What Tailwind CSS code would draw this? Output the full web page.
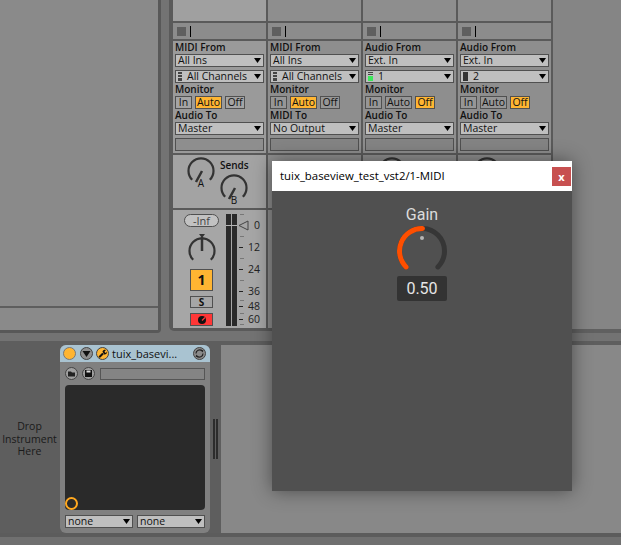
<!DOCTYPE html>
<html lang="en">
<head>
    <meta charset="UTF-8">
    <meta name="viewport" content="width=device-width, initial-scale=1.0">
    <title>tuix_baseview_test_vst2</title>
    <script src="https://cdn.jsdelivr.net/npm/@tailwindcss/browser@4"></script>
</head>
<body class="bg-[#5c5c5c]">
<div class="relative w-[621px] h-[545px] overflow-hidden flex flex-col bg-[#5c5c5c] font-['Open_Sans',sans-serif] text-[10.5px] leading-none text-[#111]">

    <!-- session view -->
    <div class="flex h-[333px] bg-[#737373]">
        <div class="w-[161px] h-[333px] flex flex-col border-r-[3px] border-b-[3px] border-[#585858] rounded-br-[4px] bg-[#8a8a8a]">
            <div class="h-[306px]"></div>
            <div class="h-[2px] bg-[#5e5e5e]"></div>
        </div>

        <div class="ml-[8px] h-[331px] flex gap-[2px] bg-[#5a5a5a] border-l-[4px] border-r-[2px] border-b-[3px] border-[#5a5a5a] rounded-bl-[5px]">

            <!-- track 1 -->
            <div class="w-[93px] flex flex-col gap-[2px]">
                <div class="h-[21px] bg-[#a0a0a0]"></div>
                <div class="h-[16px] bg-[#8c8c8c] flex items-center pl-[4px] gap-[4px]">
                    <div class="w-[9px] h-[9px] bg-[#5f5f5f]"></div>
                    <div class="w-[1px] h-[11px] bg-black"></div>
                </div>
                <div class="h-[112px] bg-[#9a9a9a] flex flex-col px-[2px] pt-[1px]">
                    <div class="h-[12px] pb-[2px] flex items-center text-[10px] font-semibold">MIDI From</div>
                    <div class="h-[13px] border border-[#505050] bg-[#bfbfbf] flex items-center justify-between px-[2px]">
                        <span>All Ins</span>
                        <svg class="w-[7px] h-[5px]" viewBox="0 0 7 5"><path d="M0 0h7L3.5 5z"/></svg>
                    </div>
                    <div class="mt-[3px] h-[13px] border border-[#505050] bg-[#bfbfbf] flex items-center px-[2px]">
                        <svg class="w-[4px] h-[9px] mr-[5px]" viewBox="0 0 4 9"><path fill="#444" d="M0 0h4v2H0zM0 3h4v2H0zM0 6h4v3H0z"/></svg>
                        <span class="flex-1">All Channels</span>
                        <svg class="w-[7px] h-[5px]" viewBox="0 0 7 5"><path d="M0 0h7L3.5 5z"/></svg>
                    </div>
                    <div class="h-[13px] pb-[1px] flex items-center text-[10px] font-semibold">Monitor</div>
                    <div class="h-[13px] flex gap-[3px]">
                        <div class="w-[17px] border border-[#505050] bg-[#a4a4a4] flex items-center justify-center">In</div>
                        <div class="w-[27px] border border-[#505050] bg-[#ffb532] flex items-center justify-center">Auto</div>
                        <div class="w-[20px] border border-[#505050] bg-[#a4a4a4] flex items-center justify-center">Off</div>
                    </div>
                    <div class="h-[13px] pb-[1px] flex items-center text-[10px] font-semibold">Audio To</div>
                    <div class="h-[13px] border border-[#505050] bg-[#bfbfbf] flex items-center justify-between px-[2px]">
                        <span>Master</span>
                        <svg class="w-[7px] h-[5px]" viewBox="0 0 7 5"><path d="M0 0h7L3.5 5z"/></svg>
                    </div>
                    <div class="mt-[3px] h-[13px] border border-[#505050] bg-[#8e8e8e]"></div>
                </div>
                <div class="h-[53px] bg-[#a3a3a3]">
                    <svg class="w-[93px] h-[53px]" viewBox="0 0 93 53">
                        <g fill="none" stroke="#333" stroke-width="2.200">
                            <path d="M19.200 24.800A12.500 12.500 0 1 1 36.800 24.800"/>
                            <path d="M52.200 41.800A12.500 12.500 0 1 1 69.800 41.800"/>
                            <path stroke-width="2.500" d="M29 16L23 27M62 33L56 44"/>
                        </g>
                        <g fill="#111" font-size="10">
                            <text x="47" y="14" font-weight="600">Sends</text>
                            <text x="28" y="32" text-anchor="middle">A</text>
                            <text x="61" y="49" text-anchor="middle">B</text>
                        </g>
                    </svg>
                </div>
                <div class="h-[118px] bg-[#a6a6a6] flex pt-[4px]">
                    <div class="ml-[11px] w-[35px] flex flex-col items-center">
                        <div class="w-[35px] h-[13px] rounded-full border border-[#505050] bg-[#c2c2c2] flex items-center justify-center text-[11px] text-[#444]">-Inf</div>
                        <svg class="mt-[7px] w-[28px] h-[30px]" viewBox="0 0 28 30">
                            <path d="M11 0h6l-3 4z" fill="#333"/>
                            <path d="M5.200 25.800A12.500 12.500 0 1 1 22.800 25.800" fill="none" stroke="#333" stroke-width="2.200"/>
                            <path d="M14 3V17" stroke="#333" stroke-width="2.500"/>
                        </svg>
                        <div class="mt-[5px] w-[23px] h-[22px] border border-[#505050] bg-[#ffb532] flex items-center justify-center text-[14px] font-bold">1</div>
                        <div class="mt-[5px] w-[23px] h-[12px] border border-[#505050] bg-[#a6a6a6] flex items-center justify-center text-[10px] font-bold">S</div>
                        <div class="mt-[5px] w-[23px] h-[13px] border border-[#505050] bg-[#ff3636] flex items-center justify-center">
                            <svg class="w-[8px] h-[8px]" viewBox="0 0 8 8"><circle cx="4" cy="4" r="4" fill="#111"/><path d="M4 4.500L7 1.500" stroke="#ff3636" stroke-width="1.200"/></svg>
                        </div>
                    </div>
                    <div class="relative ml-[7px] w-[11px] h-[112px] flex gap-[1px]">
                        <div class="flex-1 bg-[#2a2a2a]"></div>
                        <div class="flex-1 bg-[#2a2a2a]"></div>
                        <div class="absolute left-0 right-0 top-[11px] h-[1px] bg-[#b5b5b5]"></div>
                    </div>
                    <svg class="w-[29px] h-[118px] -mt-[4px]" viewBox="0 0 29 118">
                        <g stroke="#777" stroke-width="1">
                            <path d="M3 4.500h4M3 26.500h4M3 48.500h4M3 70.500h4M3 90.500h4M3 103.500h4M3 114.500h4"/>
                        </g>
                        <g stroke="#222" stroke-width="1.200">
                            <path d="M2 37.500h4M2 59.500h4M2 81.500h4M2 96.500h4M2 109.500h4"/>
                        </g>
                        <path d="M2 15.500L11 11v9z" fill="none" stroke="#444"/>
                        <g fill="#222" font-size="10.500" text-anchor="end">
                            <text x="23" y="19">0</text>
                            <text x="23" y="41">12</text>
                            <text x="23" y="63">24</text>
                            <text x="23" y="85">36</text>
                            <text x="23" y="100">48</text>
                            <text x="23" y="113">60</text>
                        </g>
                    </svg>
                </div>
            </div>

            <!-- track 2 -->
            <div class="w-[93px] flex flex-col gap-[2px]">
                <div class="h-[21px] bg-[#8e8e8e]"></div>
                <div class="h-[16px] bg-[#8c8c8c] flex items-center pl-[4px] gap-[4px]">
                    <div class="w-[9px] h-[9px] bg-[#5f5f5f]"></div>
                    <div class="w-[1px] h-[11px] bg-black"></div>
                </div>
                <div class="h-[112px] bg-[#8e8e8e] flex flex-col px-[2px] pt-[1px]">
                    <div class="h-[12px] pb-[2px] flex items-center text-[10px] font-semibold">MIDI From</div>
                    <div class="h-[13px] border border-[#505050] bg-[#bfbfbf] flex items-center justify-between px-[2px]">
                        <span>All Ins</span>
                        <svg class="w-[7px] h-[5px]" viewBox="0 0 7 5"><path d="M0 0h7L3.5 5z"/></svg>
                    </div>
                    <div class="mt-[3px] h-[13px] border border-[#505050] bg-[#bfbfbf] flex items-center px-[2px]">
                        <svg class="w-[4px] h-[9px] mr-[5px]" viewBox="0 0 4 9"><path fill="#444" d="M0 0h4v2H0zM0 3h4v2H0zM0 6h4v3H0z"/></svg>
                        <span class="flex-1">All Channels</span>
                        <svg class="w-[7px] h-[5px]" viewBox="0 0 7 5"><path d="M0 0h7L3.5 5z"/></svg>
                    </div>
                    <div class="h-[13px] pb-[1px] flex items-center text-[10px] font-semibold">Monitor</div>
                    <div class="h-[13px] flex gap-[3px]">
                        <div class="w-[17px] border border-[#505050] bg-[#969696] flex items-center justify-center">In</div>
                        <div class="w-[27px] border border-[#505050] bg-[#ffb532] flex items-center justify-center">Auto</div>
                        <div class="w-[20px] border border-[#505050] bg-[#969696] flex items-center justify-center">Off</div>
                    </div>
                    <div class="h-[13px] pb-[1px] flex items-center text-[10px] font-semibold">MIDI To</div>
                    <div class="h-[13px] border border-[#505050] bg-[#bfbfbf] flex items-center justify-between px-[2px]">
                        <span>No Output</span>
                        <svg class="w-[7px] h-[5px]" viewBox="0 0 7 5"><path d="M0 0h7L3.5 5z"/></svg>
                    </div>
                    <div class="mt-[3px] h-[13px] border border-[#505050] bg-[#848484]"></div>
                </div>
                <div class="h-[53px] bg-[#8e8e8e]"></div>
                <div class="h-[118px] bg-[#8e8e8e]"></div>
            </div>

            <!-- track 3 -->
            <div class="w-[93px] flex flex-col gap-[2px]">
                <div class="h-[21px] bg-[#8e8e8e]"></div>
                <div class="h-[16px] bg-[#8c8c8c] flex items-center pl-[4px] gap-[4px]">
                    <div class="w-[9px] h-[9px] bg-[#5f5f5f]"></div>
                    <div class="w-[1px] h-[11px] bg-black"></div>
                </div>
                <div class="h-[112px] bg-[#8e8e8e] flex flex-col px-[2px] pt-[1px]">
                    <div class="h-[12px] pb-[2px] flex items-center text-[10px] font-semibold">Audio From</div>
                    <div class="h-[13px] border border-[#505050] bg-[#bfbfbf] flex items-center justify-between px-[2px]">
                        <span>Ext. In</span>
                        <svg class="w-[7px] h-[5px]" viewBox="0 0 7 5"><path d="M0 0h7L3.5 5z"/></svg>
                    </div>
                    <div class="mt-[3px] h-[13px] border border-[#505050] bg-[#bfbfbf] flex items-center px-[2px]">
                        <svg class="w-[5px] h-[9px] mr-[5px]" viewBox="0 0 5 9"><path fill="#444" d="M0 0h5v1H0zM0 2h5v1H0z"/><path fill="#3be85a" d="M0 4h5v5H0z"/></svg>
                        <span class="flex-1">1</span>
                        <svg class="w-[7px] h-[5px]" viewBox="0 0 7 5"><path d="M0 0h7L3.5 5z"/></svg>
                    </div>
                    <div class="h-[13px] pb-[1px] flex items-center text-[10px] font-semibold">Monitor</div>
                    <div class="h-[13px] flex gap-[3px]">
                        <div class="w-[17px] border border-[#505050] bg-[#969696] flex items-center justify-center">In</div>
                        <div class="w-[27px] border border-[#505050] bg-[#969696] flex items-center justify-center">Auto</div>
                        <div class="w-[20px] border border-[#505050] bg-[#ffb532] flex items-center justify-center">Off</div>
                    </div>
                    <div class="h-[13px] pb-[1px] flex items-center text-[10px] font-semibold">Audio To</div>
                    <div class="h-[13px] border border-[#505050] bg-[#bfbfbf] flex items-center justify-between px-[2px]">
                        <span>Master</span>
                        <svg class="w-[7px] h-[5px]" viewBox="0 0 7 5"><path d="M0 0h7L3.5 5z"/></svg>
                    </div>
                    <div class="mt-[3px] h-[13px] border border-[#505050] bg-[#848484]"></div>
                </div>
                <div class="h-[53px] bg-[#8e8e8e]">
                    <svg class="w-[93px] h-[53px]" viewBox="0 0 93 53">
                        <path d="M20.200 24.800A12.500 12.500 0 1 1 37.800 24.800" fill="none" stroke="#333" stroke-width="2.200"/>
                    </svg>
                </div>
                <div class="h-[118px] bg-[#8e8e8e]"></div>
            </div>

            <!-- track 4 -->
            <div class="w-[93px] flex flex-col gap-[2px]">
                <div class="h-[21px] bg-[#8e8e8e]"></div>
                <div class="h-[16px] bg-[#8c8c8c] flex items-center pl-[4px] gap-[4px]">
                    <div class="w-[9px] h-[9px] bg-[#5f5f5f]"></div>
                    <div class="w-[1px] h-[11px] bg-black"></div>
                </div>
                <div class="h-[112px] bg-[#8e8e8e] flex flex-col px-[2px] pt-[1px]">
                    <div class="h-[12px] pb-[2px] flex items-center text-[10px] font-semibold">Audio From</div>
                    <div class="h-[13px] border border-[#505050] bg-[#bfbfbf] flex items-center justify-between px-[2px]">
                        <span>Ext. In</span>
                        <svg class="w-[7px] h-[5px]" viewBox="0 0 7 5"><path d="M0 0h7L3.5 5z"/></svg>
                    </div>
                    <div class="mt-[3px] h-[13px] border border-[#505050] bg-[#bfbfbf] flex items-center px-[2px]">
                        <svg class="w-[5px] h-[9px] mr-[5px]" viewBox="0 0 5 9"><path fill="#333" d="M0 0h5v9H0z"/></svg>
                        <span class="flex-1">2</span>
                        <svg class="w-[7px] h-[5px]" viewBox="0 0 7 5"><path d="M0 0h7L3.5 5z"/></svg>
                    </div>
                    <div class="h-[13px] pb-[1px] flex items-center text-[10px] font-semibold">Monitor</div>
                    <div class="h-[13px] flex gap-[3px]">
                        <div class="w-[17px] border border-[#505050] bg-[#969696] flex items-center justify-center">In</div>
                        <div class="w-[27px] border border-[#505050] bg-[#969696] flex items-center justify-center">Auto</div>
                        <div class="w-[20px] border border-[#505050] bg-[#ffb532] flex items-center justify-center">Off</div>
                    </div>
                    <div class="h-[13px] pb-[1px] flex items-center text-[10px] font-semibold">Audio To</div>
                    <div class="h-[13px] border border-[#505050] bg-[#bfbfbf] flex items-center justify-between px-[2px]">
                        <span>Master</span>
                        <svg class="w-[7px] h-[5px]" viewBox="0 0 7 5"><path d="M0 0h7L3.5 5z"/></svg>
                    </div>
                    <div class="mt-[3px] h-[13px] border border-[#505050] bg-[#848484]"></div>
                </div>
                <div class="h-[53px] bg-[#8e8e8e]">
                    <svg class="w-[93px] h-[53px]" viewBox="0 0 93 53">
                        <path d="M20.200 24.800A12.500 12.500 0 1 1 37.800 24.800" fill="none" stroke="#333" stroke-width="2.200"/>
                    </svg>
                </div>
                <div class="h-[118px] bg-[#8e8e8e]"></div>
            </div>
        </div>

        <div class="flex-1 h-[333px] bg-[#858585] border-b-[4px] border-[#606060]"></div>
    </div>

    <div class="h-[8px] bg-[#737373]"></div>

    <!-- device view -->
    <div class="h-[192px] flex pt-[4px] bg-[#5e5e5e]">
        <div class="w-[60px] flex flex-col items-center justify-center text-center leading-[12.500px] pr-[1px] text-[#1a1a1a]">
            <span>Drop</span>
            <span>Instrument</span>
            <span>Here</span>
        </div>

        <div class="w-[150px] h-[188px] rounded-[6px] bg-[#808080] flex flex-col overflow-hidden">
            <div class="h-[17px] bg-[#a9c3d1] flex items-center pl-[3px] pr-[4px]">
                <svg class="w-[13px] h-[13px]" viewBox="0 0 13 13"><circle cx="6.500" cy="6.500" r="6" fill="#ffb532" stroke="#777"/></svg>
                <svg class="ml-[4px] w-[13px] h-[13px]" viewBox="0 0 13 13"><circle cx="6.500" cy="6.500" r="6" fill="#8f8f8f" stroke="#444"/><path d="M2.500 4h8L6.500 10z" fill="#111"/></svg>
                <svg class="ml-[3px] w-[13px] h-[13px]" viewBox="0 0 13 13"><circle cx="6.500" cy="6.500" r="6" fill="#ffb532" stroke="#444"/><path d="M3.200 10.200L7 6.500" stroke="#111" stroke-width="2"/><path d="M6.500 4.500C7 3 8.500 2.500 10 3L8.500 4.500l.5 1 1 .4L11 4.500c.4 1.800-1.200 3.300-3 3z" fill="#111"/></svg>
                <span class="ml-[3px] flex-1 text-[11px]">tuix_basevi...</span>
                <svg class="w-[13px] h-[13px]" viewBox="0 0 13 13"><circle cx="6.500" cy="6.500" r="6" fill="#8a8a8a" stroke="#444"/><path d="M3 6.500A3.500 3.500 0 0 1 9 4M10 6.500A3.500 3.500 0 0 1 4 9" fill="none" stroke="#222" stroke-width="1.200"/><path d="M8 2.500l2.500 1-1 2zM5 10.500l-2.500-1 1-2z" fill="#222"/></svg>
            </div>
            <div class="h-[23px] flex items-center pl-[5px] pr-[5px]">
                <svg class="w-[13px] h-[13px]" viewBox="0 0 13 13"><circle cx="6.500" cy="6.500" r="6" fill="#a0a0a0" stroke="#444"/><path d="M3 4.500h3l1 1h3v4H3z" fill="#222"/></svg>
                <svg class="ml-[4px] w-[13px] h-[13px]" viewBox="0 0 13 13"><circle cx="6.500" cy="6.500" r="6" fill="#a0a0a0" stroke="#444"/><path d="M3 3h7v7H3z" fill="#111"/><path d="M4.500 3.500h4v2h-4z" fill="#ddd"/></svg>
                <div class="ml-[5px] flex-1 h-[12px] border border-[#555] bg-[#848484]"></div>
            </div>
            <div class="relative mx-[5px] h-[125px] rounded-[4px] bg-[#2a2a2a]">
                <div class="absolute left-0 bottom-0 w-[13px] h-[13px] rounded-full border-2 border-[#ffa81f]"></div>
            </div>
            <div class="mx-[5px] mt-[5px] flex gap-[4px]">
                <div class="flex-1 h-[13px] border border-[#505050] bg-[#bfbfbf] flex items-center justify-between px-[2px]">
                    <span>none</span>
                    <svg class="w-[7px] h-[5px]" viewBox="0 0 7 5"><path d="M0 0h7L3.500 5z"/></svg>
                </div>
                <div class="flex-1 h-[13px] border border-[#505050] bg-[#bfbfbf] flex items-center justify-between px-[2px]">
                    <span>none</span>
                    <svg class="w-[7px] h-[5px]" viewBox="0 0 7 5"><path d="M0 0h7L3.500 5z"/></svg>
                </div>
            </div>
        </div>

        <div class="w-[11px] flex justify-center gap-[1px] pt-[74px]">
            <div class="w-[2px] h-[40px] bg-[#2c2c2c]"></div>
            <div class="w-[2px] h-[40px] bg-[#2c2c2c]"></div>
        </div>

        <div class="flex-1 h-[188px] bg-[#888888]"></div>
    </div>

    <div class="flex-1 bg-[#707070] border-t-[4px] border-[#5c5c5c]"></div>

    <!-- plugin window -->
    <div class="absolute left-[272px] top-[161px] w-[300px] h-[330px] flex flex-col bg-[#505050] shadow-[0_0_18px_rgba(0,0,0,0.45)]">
        <div class="h-[30px] bg-white flex items-center justify-between pl-[8px] pr-[1px]">
            <span class="text-[11.400px] text-black">tuix_baseview_test_vst2/1-MIDI</span>
            <div class="w-[19px] h-[19px] bg-[#c75050] flex items-center justify-center text-white text-[11px] font-bold">x</div>
        </div>
        <div class="flex flex-col items-center font-['Roboto',sans-serif] text-[16px]">
            <div class="mt-[16px] h-[16px] flex items-center text-[#dcdcdc]">Gain</div>
            <svg class="mt-[3px] w-[54px] h-[46px]" viewBox="0 0 54 46">
                <path d="M11.100 40.900A22.500 22.500 0 1 1 42.900 40.900" fill="none" stroke="#363636" stroke-width="5" stroke-linecap="round"/>
                <path d="M11.100 40.900A22.500 22.500 0 0 1 27.500 2.500" fill="none" stroke="#ff4f00" stroke-width="5" stroke-linecap="round"/>
                <circle cx="27" cy="12" r="2" fill="#b5b5b5"/>
            </svg>
            <div class="mt-[4px] w-[50px] h-[25px] rounded-[2px] bg-[#333333] flex items-center justify-center text-[#e6e6e6]">0.50</div>
        </div>
    </div>
</div>
</body>
</html>
